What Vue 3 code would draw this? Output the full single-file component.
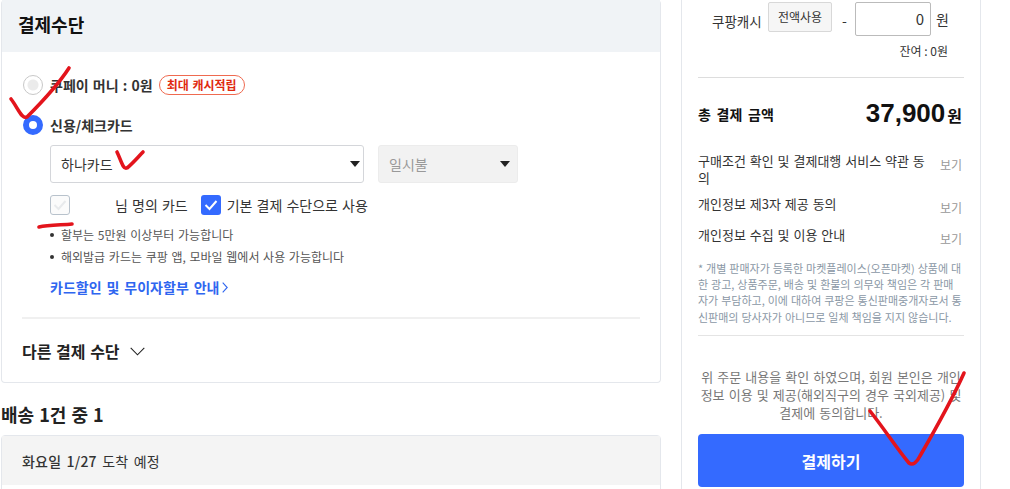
<script setup>
const bullets = ['할부는 5만원 이상부터 가능합니다', '해외발급 카드는 쿠팡 앱, 모바일 웹에서 사용 가능합니다']
const strokes = [
  'M69 68 C58 85 42 102 27 117 C22 120 18 108 11 99',
  'M117 152 C121 160 123 170 127 168 C133 163 138 157 143 152',
  'M39 227 C48 225 62 225 72 224',
  'M870 411 C885 430 898 450 909 463 C913 466 917 462 920 456 C935 430 952 400 964 373'
]
</script>

<template>
  <div class="page">
    <main class="left">
      <section class="card pay">
        <h2 class="pay-title">결제수단</h2>
        <div class="pay-body">
          <div class="radio-row muted-row">
            <span class="radio off"></span>
            <span class="radio-label">쿠페이 머니 : 0원</span>
            <span class="badge">최대 캐시적립</span>
          </div>
          <div class="radio-row on-row">
            <span class="radio on"></span>
            <span class="radio-label">신용/체크카드</span>
          </div>
          <div class="selects">
            <div class="select main-select">
              <span>하나카드</span><i class="caret"></i>
            </div>
            <div class="select sub-select">
              <span>일시불</span><i class="caret"></i>
            </div>
          </div>
          <div class="checks">
            <span class="check off-check">
              <svg width="16" height="14" viewBox="0 0 16 14"><path d="M2.5 7l4 4 7-8" fill="none" stroke="#e8eaec" stroke-width="2"/></svg>
            </span>
            <span class="name-label">님 명의 카드</span>
            <span class="check on-check">
              <svg width="16" height="14" viewBox="0 0 16 14"><path d="M2.5 7l4 4 7-8" fill="none" stroke="#fff" stroke-width="2"/></svg>
            </span>
            <span class="default-label">기본 결제 수단으로 사용</span>
          </div>
          <ul class="bullets">
            <li v-for="b in bullets" :key="b">{{ b }}</li>
          </ul>
          <a class="link">카드할인 및 무이자할부 안내
            <svg width="6" height="11" viewBox="0 0 6 11"><path d="M.7.7l4.5 4.8L.7 10.3" fill="none" stroke="#2f66f0" stroke-width="1.1"/></svg>
          </a>
        </div>
        <div class="other">
          <span>다른 결제 수단</span>
          <svg width="15" height="9" viewBox="0 0 15 9"><path d="M.7.8l6.8 7 6.8-7" fill="none" stroke="#222" stroke-width="1.1"/></svg>
        </div>
      </section>
      <h2 class="ship-title">배송 1건 중 1</h2>
      <section class="card ship">
        <div class="ship-head"><b>화요일 1/27</b> 도착 예정</div>
      </section>
    </main>

    <aside class="right">
      <div class="cash">
        <span class="cash-label">쿠팡캐시</span>
        <button class="all-btn">전액사용</button>
        <span class="minus">-</span>
        <span class="amount">0</span>
        <span class="won">원</span>
      </div>
      <div class="rest">잔여 : 0원</div>
      <div class="total">
        <span class="total-label">총 결제 금액</span>
        <span class="total-price">37,900<small>원</small></span>
      </div>
      <div class="term tall"><span>구매조건 확인 및 결제대행 서비스 약관 동의</span><em>보기</em></div>
      <div class="term"><span>개인정보 제3자 제공 동의</span><em>보기</em></div>
      <div class="term"><span>개인정보 수집 및 이용 안내</span><em>보기</em></div>
      <p class="notice">* 개별 판매자가 등록한 마켓플레이스(오픈마켓) 상품에 대<br>한 광고, 상품주문, 배송 및 환불의 의무와 책임은 각 판매<br>자가 부담하고, 이에 대하여 쿠팡은 통신판매중개자로서 통<br>신판매의 당사자가 아니므로 일체 책임을 지지 않습니다.</p>
      <p class="agree">위 주문 내용을 확인 하였으며, 회원 본인은 개인정보 이용 및 제공(해외직구의 경우 국외제공) 및 결제에 동의합니다.</p>
      <button class="pay-btn">결제하기</button>
    </aside>

    <svg class="scribble" width="1010" height="489" viewBox="0 0 1010 489">
      <path v-for="d in strokes" :key="d" :d="d" fill="none" stroke="#e3141c" stroke-width="3.6" stroke-linecap="round" stroke-linejoin="round"/>
    </svg>
  </div>
</template>

<style>
html, body { margin: 0; background: #fff; overflow: hidden; }
</style>

<style scoped>
.page {
  position: relative;
  width: 1010px;
  height: 489px;
  overflow: hidden;
  display: flex;
  align-items: flex-start;
  font-family: "Noto Sans CJK KR", "Noto Sans", sans-serif;
  color: #222;
  background: #fff;
  word-spacing: 1px;
}
.left { width: 660px; margin-left: 1px; flex: none; }
.card { border: 1px solid #e4e7ec; border-radius: 4px; box-sizing: border-box; }
.pay { height: 383px; border-top: 0; }
.pay-title {
  margin: 0;
  height: 52px;
  line-height: 48px;
  padding-left: 16px;
  font-size: 18px;
  font-weight: 700;
  color: #111;
  background: #f0f3f6;
}
.pay-body { height: 267px; padding-top: 23px; margin: 0 20px; border-bottom: 2px solid #f0f0f0; box-sizing: border-box; }
.radio-row { display: flex; align-items: center; height: 20px; font-size: 14px; font-weight: 700; }
.on-row { margin-top: 20px; }
.radio { width: 20px; height: 20px; margin-left: 1px; border-radius: 50%; box-sizing: border-box; flex: none; }
.radio.off { border: 1px solid #c8c8c8; background: radial-gradient(circle, #ebebeb 0 5px, #fff 6px); }
.radio.on { border: 6px solid #346aff; background: #fff; }
.radio-label { margin-left: 7px; color: #333; }
.badge {
  margin-left: 6px;
  height: 20px;
  line-height: 18px;
  padding: 0 7px;
  border: 1px solid #ef6a50;
  border-radius: 10px;
  box-sizing: border-box;
  font-size: 12px;
  font-weight: 700;
  color: #e02a10;
}
.selects { display: flex; gap: 14px; margin: 10px 0 0 28px; }
.select {
  position: relative;
  height: 38px;
  line-height: 36px;
  box-sizing: border-box;
  border: 1px solid #d4d6da;
  border-radius: 3px;
  padding-left: 10px;
  font-size: 14px;
  color: #333;
}
.main-select { width: 314px; }
.sub-select { width: 140px; background: #f2f2f2; border-color: #ececec; color: #999; }
.caret {
  position: absolute;
  top: 15px;
  width: 0;
  height: 0;
  border: 5px solid transparent;
  border-top: 6px solid #222;
  border-bottom: 0;
}
.main-select .caret { right: 3px; }
.sub-select .caret { right: 7px; }
.checks { display: flex; align-items: center; height: 22px; margin: 11px 0 0 28px; font-size: 14px; color: #333; }
.check { width: 20px; height: 20px; border-radius: 3px; box-sizing: border-box; flex: none; display: flex; align-items: center; justify-content: center; }
.off-check { border: 1px solid #b8c2cc; background: #fbfbfb; }
.on-check { background: #346aff; margin-left: 13px; }
.name-label { margin-left: 45px; }
.default-label { margin-left: 6px; }
.bullets { margin: 8px 0 0 28px; padding: 0; list-style: none; font-size: 12px; color: #555; }
.bullets li { position: relative; height: 22px; line-height: 22px; padding-left: 11px; }
.bullets li::before { content: ""; position: absolute; left: 0; top: 9px; width: 4px; height: 4px; border-radius: 50%; background: #333; }
.link { display: flex; align-items: center; gap: 2px; margin: 9px 0 0 28px; font-size: 14px; font-weight: 700; color: #2f66f0; line-height: 20px; word-spacing: 1.8px; }
.other { display: flex; align-items: center; gap: 10px; height: 64px; padding-left: 20px; font-size: 16px; font-weight: 700; color: #222; }
.ship-title { margin: 21px 0 0; height: 31px; line-height: 20px; font-size: 18px; font-weight: 700; color: #222; }
.ship { height: 80px; }
.ship-head { height: 49px; line-height: 50px; padding-left: 20px; font-size: 14px; background: #f4f4f4; color: #333; word-spacing: 2px; letter-spacing: .2px; }
.ship-head b { font-weight: 500; }
.right {
  width: 300px;
  height: 489px;
  margin-left: 20px;
  flex: none;
  box-sizing: border-box;
  padding: 0 16px;
  border-left: 1px solid #e4e7ec;
  border-right: 1px solid #e4e7ec;
  font-size: 13px;
}
.cash { display: flex; align-items: flex-start; padding-left: 14px; height: 36px; margin-top: 2px; font-size: 14px; color: #333; }
.cash-label { line-height: 38px; width: 56px; flex: none; font-size: 13.5px; }
.all-btn {
  width: 64px;
  height: 30px;
  padding: 0 0 2px;
  border: 1px solid #d8d8d8;
  border-radius: 2px;
  background: #f6f6f6;
  font: 12px "Noto Sans CJK KR", sans-serif;
  color: #333;
}
.minus { width: 21px; text-align: center; line-height: 36px; margin-left: 2px; flex: none; }
.amount { width: 76px; height: 34px; line-height: 32px; box-sizing: border-box; border: 1px solid #bbb; border-radius: 2px; padding-right: 6px; text-align: right; font-size: 15px; flex: none; }
.won { margin-left: 5px; line-height: 34px; }
.rest { text-align: right; padding-right: 16px; margin-top: 4px; height: 35px; line-height: 18px; font-size: 12px; color: #333; border-bottom: 1px solid #ddd; word-spacing: 0; }
.total { display: flex; justify-content: space-between; align-items: center; height: 71px; margin-bottom: 4px; }
.total-label { font-size: 14px; font-weight: 700; color: #111; word-spacing: 2.5px; }
.total-price { font-family: "Liberation Sans", "Noto Sans CJK KR", sans-serif; font-size: 26px; font-weight: 700; color: #111; display: flex; align-items: baseline; margin-right: 2px; }
.total-price small { font-family: "Noto Sans CJK KR", sans-serif; font-size: 16px; margin-left: 2px; }
.term { display: flex; justify-content: space-between; min-height: 31px; line-height: 17px; font-size: 13px; color: #333; }
.term.tall { min-height: 43px; }
.term span { width: 228px; margin-top: -1px; }
.term em { font-style: normal; font-size: 12px; color: #999; padding: 3px 2px 0 0; }
.notice { margin: 2px 0 0; padding-bottom: 10px; border-bottom: 1px solid #e4e4e4; font-size: 11px; line-height: 16.2px; color: #8a97a5; height: 65px; word-spacing: .5px; white-space: nowrap; }
.agree { margin: 32px 0 0; padding: 0 2px; font-size: 13px; line-height: 18px; text-align: center; color: #777; word-spacing: 1.2px; }
.pay-btn {
  display: block;
  width: 266px;
  height: 53px;
  margin-top: 12px;
  border: 0;
  border-radius: 4px;
  background: #346aff;
  color: #fff;
  font: 700 16px "Noto Sans CJK KR", sans-serif;
}
.scribble { position: absolute; left: 0; top: 0; pointer-events: none; }
</style>
